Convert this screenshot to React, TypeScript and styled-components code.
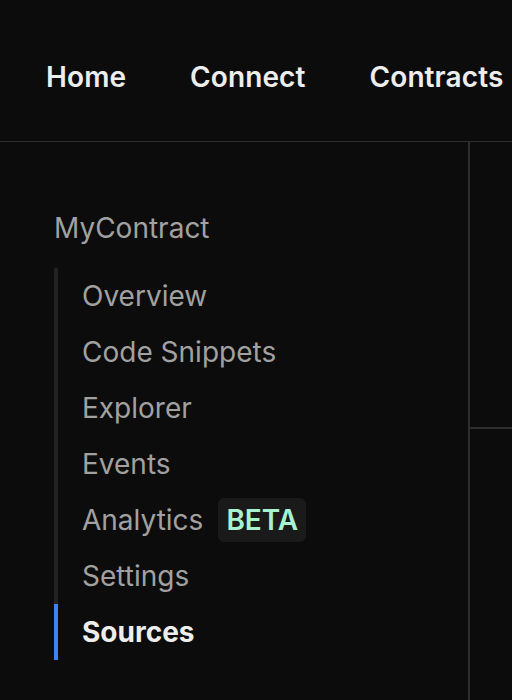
import styled, { createGlobalStyle } from "styled-components";

const GlobalStyle = createGlobalStyle`
  html, body {
    margin: 0;
    padding: 0;
    background: #0c0c0c;
    font-family: Inter, "Noto Sans", sans-serif;
  }
  #root {
    min-height: 100vh;
  }
`;

const navLinks = ["Home", "Connect", "Contracts"];

const sections = [
  { label: "Overview" },
  { label: "Code Snippets" },
  { label: "Explorer" },
  { label: "Events" },
  { label: "Analytics", badge: "BETA" },
  { label: "Settings" },
  { label: "Sources", active: true },
];

const App = () => {
  return (
    <Page>
      <GlobalStyle />
      <Header>
        {navLinks.map((l) => (
          <NavLink key={l}>{l}</NavLink>
        ))}
      </Header>
      <Body>
        <Sidebar>
          <ContractName>MyContract</ContractName>
          <SectionList>
            {sections.map((s) => (
              <SectionItem key={s.label} $active={!!s.active}>
                {s.label}
                {s.badge && <Badge>{s.badge}</Badge>}
              </SectionItem>
            ))}
          </SectionList>
        </Sidebar>
        <Content>
          <ContentTop />
          <ContentBottom />
        </Content>
      </Body>
    </Page>
  );
};

export default App;

const Page = styled.div`
  min-height: 100vh;
  display: flex;
  flex-direction: column;
  background: #0c0c0c;
  overflow: hidden;
`;

const Header = styled.nav`
  height: 142px;
  box-sizing: border-box;
  border-bottom: 1px solid #2e2e2e;
  display: flex;
  align-items: flex-start;
  gap: 64px;
  padding: 57px 0 0 46px;
  white-space: nowrap;
`;

const NavLink = styled.span`
  font-size: 28px;
  line-height: 40px;
  font-weight: 600;
  letter-spacing: 0.1px;
  color: #ededed;
`;

const Body = styled.div`
  flex: 1;
  display: flex;
`;

const Sidebar = styled.aside`
  width: 470px;
  flex-shrink: 0;
  box-sizing: border-box;
  border-right: 2px solid #2e2e2e;
  padding: 66px 0 0 54px;
`;

const ContractName = styled.div`
  font-size: 28px;
  line-height: 40px;
  color: #a1a1a1;
  margin-bottom: 20px;
`;

const SectionList = styled.ul`
  list-style: none;
  margin: 0;
  padding: 0;
  border-left: 4px solid #222222;
  display: flex;
  flex-direction: column;
`;

const SectionItem = styled.li<{ $active: boolean }>`
  position: relative;
  display: flex;
  align-items: center;
  height: 56px;
  padding-left: 24px;
  font-size: 28px;
  line-height: 56px;
  font-weight: ${(p) => (p.$active ? 700 : 400)};
  color: ${(p) => (p.$active ? "#ededed" : "#a1a1a1")};

  &::before {
    content: "";
    display: ${(p) => (p.$active ? "block" : "none")};
    position: absolute;
    left: -4px;
    top: 0;
    bottom: 0;
    width: 4px;
    background: #3b82f6;
  }
`;

const Badge = styled.span`
  margin-left: 15px;
  height: 44px;
  display: inline-flex;
  align-items: center;
  padding: 0 8px;
  border-radius: 6px;
  background: #1a1a1a;
  color: #a7f3d0;
  font-weight: 600;
  font-size: 28px;
  line-height: 44px;
`;

const Content = styled.main`
  flex: 1;
  display: flex;
  flex-direction: column;
`;

const ContentTop = styled.div`
  height: 285px;
  border-bottom: 2px solid #2e2e2e;
`;

const ContentBottom = styled.div`
  flex: 1;
`;
